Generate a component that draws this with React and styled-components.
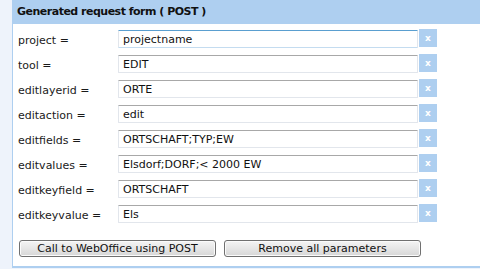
import React from "react";
import styled, { createGlobalStyle } from "styled-components";

const GlobalStyle = createGlobalStyle`
  html, body {
    margin: 0;
    padding: 0;
    background: #eef3fb;
    overflow: hidden;
  }
  body {
    font-family: Verdana, "DejaVu Sans", sans-serif;
    font-size: 11px;
    color: #1a1a1a;
  }
`;

const params = [
  { name: "project", value: "projectname", focused: true },
  { name: "tool", value: "EDIT" },
  { name: "editlayerid", value: "ORTE" },
  { name: "editaction", value: "edit" },
  { name: "editfields", value: "ORTSCHAFT;TYP;EW" },
  { name: "editvalues", value: "Elsdorf;DORF;< 2000 EW" },
  { name: "editkeyfield", value: "ORTSCHAFT" },
  { name: "editkeyvalue", value: "Els" },
];

const Page = styled.div`
  padding-left: 12px;
  height: 269px;
  box-sizing: border-box;
`;

const Panel = styled.div`
  height: 268px;
  box-sizing: border-box;
  background: #fff;
  border-left: 1px solid #aecff0;
  border-bottom: 2px solid #aecff0;
`;

const Header = styled.div`
  height: 24px;
  line-height: 24px;
  background: #aecff0;
  padding-left: 4px;
  font-weight: bold;
  letter-spacing: -0.5px;
  color: #111;
`;

const Form = styled.div`
  display: grid;
  grid-template-columns: 100px 300px 18px;
  grid-auto-rows: 18px;
  row-gap: 7px;
  padding: 5px 0 0 5px;
`;

const Label = styled.label`
  padding-top: 5px;
  line-height: 13px;
  white-space: nowrap;
`;

const Field = styled.input`
  box-sizing: border-box;
  width: 300px;
  height: 18px;
  margin-top: 1px;
  padding: 0 4px;
  font-family: inherit;
  font-size: 11px;
  color: #111;
  background: #fff;
  border: 1px solid #e2e6ec;
  border-top-color: ${(p) => (p.$focused ? "#5a9fd0" : "#a8a8a8")};
  border-bottom-color: ${(p) => (p.$focused ? "#c4dcf0" : "#e2e6ec")};
  border-radius: 1px;
  outline: none;
`;

const Clear = styled.button`
  width: 18px;
  height: 18px;
  margin: 0 0 0 1px;
  padding: 0;
  border: none;
  background: #aecff0;
  color: #fff;
  font-family: inherit;
  font-size: 9px;
  font-weight: bold;
  line-height: 16px;
  cursor: pointer;
`;

const Actions = styled.div`
  display: flex;
  gap: 8px;
  padding: 18px 0 0 6px;
`;

const Button = styled.button`
  box-sizing: border-box;
  width: 197px;
  height: 17px;
  padding: 0;
  font-family: inherit;
  font-size: 11px;
  color: #111;
  border: 1px solid #707070;
  border-radius: 3px;
  background: linear-gradient(#f4f4f4, #e6e6e6 50%, #d6d6d6);
  box-shadow: inset 0 0 0 1px #fbfbfb;
  line-height: 14px;
`;

export default function App() {
  return (
    <>
      <GlobalStyle />
      <Page>
        <Panel>
          <Header>Generated request form ( POST )</Header>
          <Form>
            {params.map((p) => (
              <React.Fragment key={p.name}>
                <Label>{p.name} =</Label>
                <Field defaultValue={p.value} $focused={p.focused} />
                <Clear>x</Clear>
              </React.Fragment>
            ))}
          </Form>
          <Actions>
            <Button>Call to WebOffice using POST</Button>
            <Button>Remove all parameters</Button>
          </Actions>
        </Panel>
      </Page>
    </>
  );
}
